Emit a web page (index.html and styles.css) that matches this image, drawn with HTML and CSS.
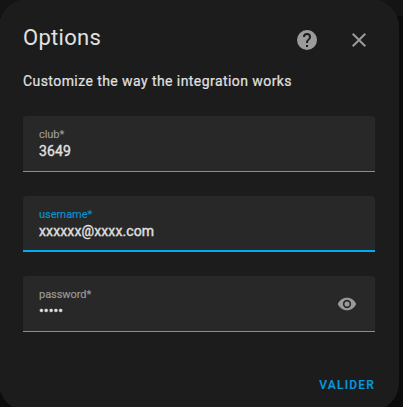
FILE: index.html
```html
<!DOCTYPE html>
<html lang="en">
<head>
<meta charset="utf-8">
<title>Options</title>
<link rel="stylesheet" href="styles.css">
</head>
<body>
<main class="dialog">
  <header class="header">
    <h1 class="title">Options</h1>
    <div class="actions">
      <svg class="icon" viewBox="0 0 24 24"><path d="M15.07,11.25L14.17,12.17C13.45,12.89 13,13.5 13,15H11V14.5C11,13.39 11.45,12.39 12.17,11.67L13.41,10.41C13.78,10.05 14,9.55 14,9C14,7.89 13.1,7 12,7A2,2 0 0,0 10,9H8A4,4 0 0,1 12,5A4,4 0 0,1 16,9C16,9.88 15.64,10.67 15.07,11.25M13,19H11V17H13M12,2A10,10 0 0,0 2,12A10,10 0 0,0 12,22A10,10 0 0,0 22,12C22,6.47 17.5,2 12,2Z"/></svg>
      <svg class="icon" viewBox="0 0 24 24"><path d="M19,6.41L17.59,5L12,10.59L6.41,5L5,6.41L10.59,12L5,17.59L6.41,19L12,13.41L17.59,19L19,17.59L13.41,12L19,6.41Z"/></svg>
    </div>
  </header>
  <p class="description">Customize the way the integration works</p>
  <div class="form">
    <div class="field">
      <div class="field-text"><span class="label">club*</span><span class="value">3649</span></div>
    </div>
    <div class="field focused">
      <div class="field-text"><span class="label">username*</span><span class="value">xxxxxx@xxxx.com</span></div>
    </div>
    <div class="field">
      <div class="field-text"><span class="label">password*</span><span class="value secret">•••••</span></div>
      <svg class="icon eye" viewBox="0 0 24 24"><path d="M12,9A3,3 0 0,0 9,12A3,3 0 0,0 12,15A3,3 0 0,0 15,12A3,3 0 0,0 12,9M12,17A5,5 0 0,1 7,12A5,5 0 0,1 12,7A5,5 0 0,1 17,12A5,5 0 0,1 12,17M12,4.5C7,4.5 2.73,7.61 1,12C2.73,16.39 7,19.5 12,19.5C17,19.5 21.27,16.39 23,12C21.27,7.61 17,4.5 12,4.5Z"/></svg>
    </div>
  </div>
  <footer class="footer"><span class="submit">VALIDER</span></footer>
</main>
</body>
</html>
```
FILE: styles.css
```css
* { box-sizing: border-box; }
html { height: 100%; overflow: hidden; }
body {
  margin: 0;
  height: 100%;
  overflow: hidden;
  background: linear-gradient(#141414 16px, #0c0c0c 16px);
  font-family: Roboto, "Liberation Sans", sans-serif;
  color: #e1e1e1;
}
.dialog {
  width: 400px;
  height: 412px;
  margin: -1px 0 0 -1px;
  padding: 0 24px;
  border-radius: 28px;
  background: #1c1c1c;
}
.header {
  display: flex;
  justify-content: space-between;
  height: 69px;
  padding-top: 23px;
}
.title {
  margin: 0;
  font-size: 22px;
  line-height: 32px;
  font-weight: 400;
  letter-spacing: 0.3px;
}
.actions { display: flex; gap: 28px; padding: 6px 4px 0 0; }
.icon { display: block; width: 24px; height: 24px; fill: #9b9b9b; }
.description {
  margin: 0;
  height: 48px;
  font-size: 14px;
  line-height: 26px;
  letter-spacing: 0.43px;
  -webkit-text-stroke: 0.2px currentColor;
  white-space: nowrap;
}
.form { display: grid; gap: 24px; }
.field {
  display: flex;
  align-items: center;
  justify-content: space-between;
  height: 56px;
  padding: 0 18px 0 16px;
  border-radius: 4px 4px 0 0;
  background: #282828;
  box-shadow: inset 0 -1px #8b8b8b;
}
.focused { box-shadow: inset 0 -2px #03a9f4; }
.field-text { display: flex; flex-direction: column; }
.label {
  font-size: 11px;
  line-height: 16px;
  letter-spacing: -0.05px;
  color: #9b9b9b;
  -webkit-text-stroke: 0.15px currentColor;
}
.focused .label { color: #0792d1; }
.value {
  margin-top: -1px;
  padding-bottom: 1px;
  font-size: 14px;
  line-height: 18px;
  letter-spacing: 0.13px;
  -webkit-text-stroke: 0.35px currentColor;
}
.secret { letter-spacing: 0.1px; }
.eye { width: 20px; height: 20px; }
.footer {
  display: flex;
  justify-content: flex-end;
  padding-top: 44px;
}
.submit {
  font-size: 12px;
  line-height: 18px;
  font-weight: 500;
  letter-spacing: 1.2px;
  color: #0598dc;
  -webkit-text-stroke: 0.2px currentColor;
}
```
